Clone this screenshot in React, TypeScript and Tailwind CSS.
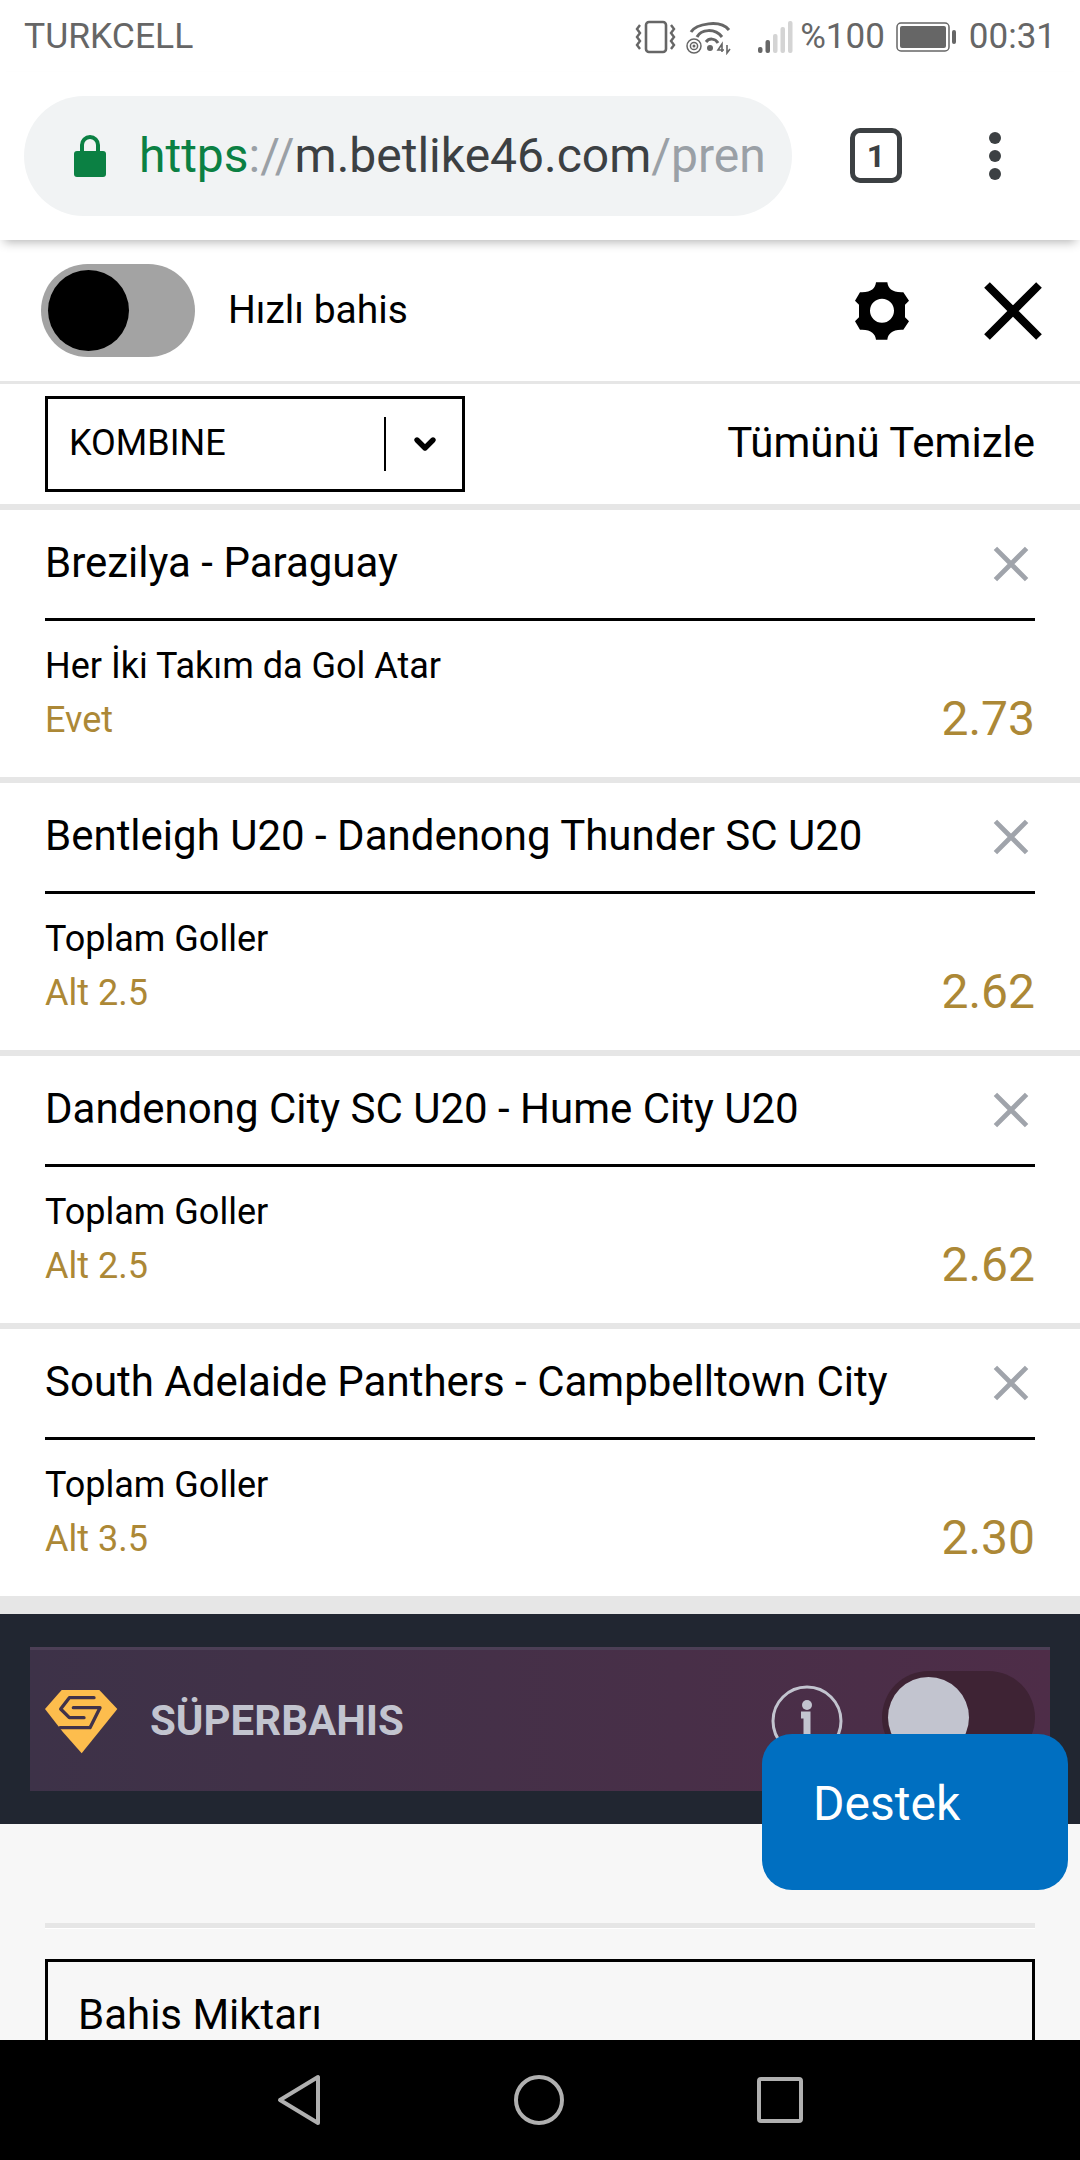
import { ChevronDown } from "lucide-react";

const bets = [
  { match: "Brezilya - Paraguay", market: "Her İki Takım da Gol Atar", pick: "Evet", odds: "2.73" },
  { match: "Bentleigh U20 - Dandenong Thunder SC U20", market: "Toplam Goller", pick: "Alt 2.5", odds: "2.62" },
  { match: "Dandenong City SC U20 - Hume City U20", market: "Toplam Goller", pick: "Alt 2.5", odds: "2.62" },
  { match: "South Adelaide Panthers - Campbelltown City", market: "Toplam Goller", pick: "Alt 3.5", odds: "2.30" },
];

function VibrateIcon() {
  return (
    <svg width="41" height="34" viewBox="0 0 41 34" fill="none" stroke="#666" strokeWidth="2.6">
      <rect x="11" y="2" width="20" height="30" rx="3" />
      <path d="M5 5 2 9l3 4-3 4 3 4-3 4 3 4M36 5l3 4-3 4 3 4-3 4 3 4-3 4" strokeWidth="2.4" />
    </svg>
  );
}

function WifiIcon() {
  return (
    <svg width="45" height="36" viewBox="0 0 45 36" fill="none" stroke="#666">
      <path d="M5 13C10 5 34 0 43 11" strokeWidth="3" />
      <path d="M11 18c4-8 18-9 25 0" strokeWidth="3" />
      <path d="M20 23c3-4 9-4 12 1" strokeWidth="3" />
      <circle cx="8" cy="27" r="7" strokeWidth="1.5" />
      <circle cx="8" cy="27" r="3.6" strokeWidth="1.5" />
      <circle cx="8" cy="27" r="1.5" fill="#666" stroke="none" />
      <circle cx="24" cy="29" r="3" fill="#666" stroke="none" />
      <path d="M36 33v-8l-4 6h6M41 26v8l3-4" strokeWidth="1.6" />
    </svg>
  );
}

function SignalIcon() {
  return (
    <svg width="35" height="34" viewBox="0 0 35 34">
      <rect x="0" y="27" width="4.5" height="6" rx="2" fill="#666" />
      <rect x="7.5" y="20" width="4.5" height="13" rx="2" fill="#666" />
      <rect x="15" y="14" width="4.5" height="19" rx="2" fill="#d4d4d4" />
      <rect x="22.5" y="7" width="4.5" height="26" rx="2" fill="#d4d4d4" />
      <rect x="30" y="1" width="4.5" height="32" rx="2" fill="#d4d4d4" />
    </svg>
  );
}

function BatteryIcon() {
  return (
    <svg width="61" height="30" viewBox="0 0 61 30">
      <rect x="1" y="1" width="52" height="28" rx="4" fill="none" stroke="#666" strokeWidth="1.5" />
      <rect x="4" y="4" width="46" height="22" rx="2" fill="#666" />
      <rect x="56" y="8" width="4" height="14" rx="2" fill="#666" />
    </svg>
  );
}

function GearIcon() {
  return (
    <svg width="54" height="58" viewBox="0 0 162 173" fill="#000">
      <path
        fillRule="evenodd"
        d="M63 0H97C99 18 112 32 145 30L162 56 150 68V105L162 117 145 143C112 141 99 155 97 173H63C61 155 48 141 15 143L0 117 12 105V68L0 56 15 30C48 32 61 18 63 0ZM81 50a36 36 0 1 0 0 72a36 36 0 1 0 0-72Z"
      />
    </svg>
  );
}

function CrossIcon({ size, color, width }: { size: number; color: string; width: number }) {
  return (
    <svg width={size} height={size} viewBox="0 0 60 60" fill="none" stroke={color} strokeWidth={width}>
      <path d="M4 4 56 56M56 4 4 56" />
    </svg>
  );
}

function SuperLogo() {
  return (
    <svg width="84" height="72" viewBox="0 0 252 216">
      <path fill="#fdbd4d" d="M15 72 65 15H178L232 72 125 205 68 140Z" />
      <g fill="none" stroke="#40324a" strokeWidth="10" strokeLinecap="round" strokeLinejoin="round">
        <path d="M162 38H88L62 72 88 98H132" />
        <path d="M100 68H180L150 128H60" />
      </g>
    </svg>
  );
}

export default function App() {
  return (
    <div className="relative flex h-[2160px] flex-col overflow-hidden bg-white font-['Roboto',sans-serif]">
      {/* Android status bar */}
      <div className="flex h-[72px] shrink-0 items-center justify-between pl-6 pr-[24px] pt-[2px] text-[35px] text-[#666]">
        <span className="text-[35.5px]">TURKCELL</span>
        <div className="flex items-center">
          <VibrateIcon />
          <span className="ml-[10px]"><WifiIcon /></span>
          <span className="ml-[27px]"><SignalIcon /></span>
          <span className="ml-[7px]">%100</span>
          <span className="ml-[11px]"><BatteryIcon /></span>
          <span className="ml-[12px]">00:31</span>
        </div>
      </div>

      {/* Chrome address bar */}
      <div className="z-10 flex h-[168px] shrink-0 items-start bg-white pl-6 pt-6 shadow-[0_6px_10px_-4px_rgba(0,0,0,0.3)]">
        <div className="flex h-[120px] w-[768px] items-center overflow-hidden rounded-[60px] bg-[#f1f3f4] pl-[49px] pr-[28px]">
          <svg width="34" height="44" viewBox="0 0 34 44" className="shrink-0">
            <path d="M9 18v-7a8 8 0 0 1 16 0v7" fill="none" stroke="#0b8043" strokeWidth="4" />
            <rect x="1" y="17" width="32" height="26" rx="3" fill="#0b8043" />
          </svg>
          <div className="ml-[32px] whitespace-nowrap text-[48px] leading-none">
            <span className="text-[#0b8043]">https</span>
            <span className="text-[#9aa0a6]">://</span>
            <span className="text-[#3c4043]">m.betlike46.com</span>
            <span className="text-[#9aa0a6]">/pren</span>
          </div>
        </div>
        <div className="ml-[58px] mt-[32px] flex h-[55px] w-[52px] items-center justify-center rounded-[10px] border-[5px] border-[#3c4043] text-[32px] font-bold leading-none text-[#3c4043]">
          1
        </div>
        <div className="ml-[87px] mt-[36px] flex flex-col gap-[6px]">
          <span className="h-[12px] w-[12px] rounded-full bg-[#3c4043]" />
          <span className="h-[12px] w-[12px] rounded-full bg-[#3c4043]" />
          <span className="h-[12px] w-[12px] rounded-full bg-[#3c4043]" />
        </div>
      </div>

      <div className="flex min-h-0 flex-1 flex-col overflow-hidden">
        {/* Quick bet row */}
        <div className="flex h-[144px] shrink-0 items-center border-b-[3px] border-[#e6e6e6] pl-[41px] pr-[37px]">
          <div className="flex h-[93px] w-[154px] items-center rounded-[47px] bg-[#a3a3a3] pl-[7px]">
            <span className="h-[81px] w-[81px] rounded-full bg-black" />
          </div>
          <span className="ml-[33px] text-[39px] text-black">Hızlı bahis</span>
          <span className="ml-auto"><GearIcon /></span>
          <span className="ml-[74px]"><CrossIcon size={60} color="#000" width={8} /></span>
        </div>

        {/* Bet type row */}
        <div className="flex h-[120px] shrink-0 items-center justify-between px-[45px]">
          <div className="flex h-[96px] w-[420px] items-center border-[3px] border-black">
            <span className="ml-[21px] flex-1 pb-[2px] text-[36px] text-black">KOMBINE</span>
            <div className="flex h-[54px] w-[78px] items-center justify-center border-l-2 border-black pl-[2px]">
              <ChevronDown size={32} strokeWidth={4} color="#000" />
            </div>
          </div>
          <span className="pb-[4px] text-[42px] text-black">Tümünü Temizle</span>
        </div>

        {/* Selections */}
        {bets.map((bet, i) => (
          <div key={i} className="shrink-0 border-t-[6px] border-[#e6e6e6] px-[45px]">
            <div className="flex h-[111px] items-center justify-between border-b-[3px] border-black pb-[4px]">
              <span className="text-[42px] text-black">{bet.match}</span>
              <span className="mr-[6px] mt-[3px]"><CrossIcon size={36} color="#a0a4ab" width={8} /></span>
            </div>
            <div className="flex h-[156px] items-end justify-between pb-[30px]">
              <div className="flex flex-col">
                <span className="text-[36px] leading-[54px] text-black">{bet.market}</span>
                <span className="text-[36px] leading-[54px] text-[#ac8836]">{bet.pick}</span>
              </div>
              <span className="text-[48px] leading-[56px] text-[#ac8836]">{bet.odds}</span>
            </div>
          </div>
        ))}

        {/* Super bet banner */}
        <div className="h-[18px] shrink-0 bg-[#e6e6e6]" />
        <div className="flex h-[210px] shrink-0 items-center bg-[#212631] px-[30px]">
          <div className="flex h-[144px] w-full items-center border-t-[3px] border-[#4c3f56] bg-gradient-to-r from-[#3d3248] to-[#4e2d48] pl-[10px]">
            <SuperLogo />
            <span className="ml-[26px] text-[42px] font-bold text-[#c2c4cf]">SÜPERBAHIS</span>
            <svg width="72" height="72" viewBox="0 0 72 72" className="ml-auto shrink-0" fill="none" stroke="#c2c4cf" strokeWidth="3">
              <circle cx="36" cy="36" r="34" />
              <circle cx="36" cy="20" r="5" fill="#c2c4cf" stroke="none" />
              <path d="M30 30h6v28" strokeWidth="7" />
            </svg>
            <div className="mb-[6px] ml-[39px] mr-[15px] flex h-[93px] w-[153px] shrink-0 items-center rounded-[47px] bg-[#3e2334] pl-[6px]">
              <span className="h-[81px] w-[81px] rounded-full bg-[#c2c4cf]" />
            </div>
          </div>
        </div>

        {/* Stake area */}
        <div className="min-h-0 flex-1 bg-[#f7f7f7] px-[45px] pt-[99px]">
          <div className="h-[6px] border-b border-white bg-[#e6e6e6]" />
          <div className="mt-[30px] h-[200px] border-[3px] border-black px-[30px] pt-[21px] text-[42px] text-black">
            Bahis Miktarı
          </div>
        </div>
      </div>

      {/* Android nav bar */}
      <div className="flex h-[120px] shrink-0 items-center justify-center gap-[193px] bg-black">
        <svg width="44" height="52" viewBox="0 0 44 52" fill="none" stroke="#b0b0b0" strokeWidth="4" strokeLinejoin="round">
          <path d="M41 3v46L3 26z" />
        </svg>
        <svg width="50" height="52" viewBox="0 0 50 52" fill="none" stroke="#b0b0b0" strokeWidth="4">
          <circle cx="25" cy="26" r="23" />
        </svg>
        <svg width="46" height="48" viewBox="0 0 46 48" fill="none" stroke="#b0b0b0" strokeWidth="4" strokeLinejoin="round">
          <rect x="2" y="3" width="42" height="42" rx="2" />
        </svg>
      </div>

      {/* Floating support button */}
      <button className="absolute left-[762px] top-[1734px] h-[156px] w-[306px] rounded-[30px] bg-[#006fc1] pb-[16px] pl-[51px] text-left text-[48px] text-white">
        Destek
      </button>
    </div>
  );
}
